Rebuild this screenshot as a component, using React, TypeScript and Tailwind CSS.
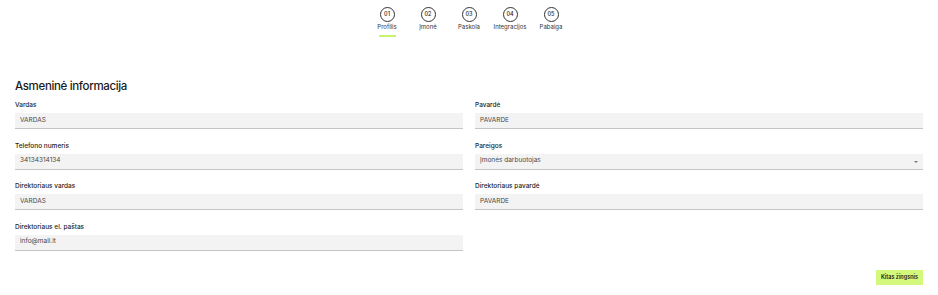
const steps = [
  { n: "01", label: "Profilis", active: true },
  { n: "02", label: "Įmonė" },
  { n: "03", label: "Paskola" },
  { n: "04", label: "Integracijos" },
  { n: "05", label: "Pabaiga" },
];

function Field({ label, value, select }: { label: string; value: string; select?: boolean }) {
  return (
    <div className="flex flex-col">
      <label className="text-[6.5px] font-medium text-[#1d1d1d] leading-[8px] mb-[4px]">{label}</label>
      <div className="relative h-[16px] bg-[#f3f3f3] border-b border-[#c4c4c4] flex items-center px-[5px] text-[6.5px] text-[#4a4a4a]">
        {value}
        {select && (
          <span className="absolute right-[5px] top-[7px] w-0 h-0 border-l-[2px] border-r-[2px] border-t-[2px] border-l-transparent border-r-transparent border-t-[#777]" />
        )}
      </div>
    </div>
  );
}

export default function App() {
  return (
    <div className="w-[938px] h-[295px] bg-white flex flex-col px-[15px]" style={{ fontFamily: "Inter, 'Noto Sans', sans-serif" }}>
      {/* Stepper */}
      <div className="flex justify-center pt-[7px]">
        {steps.map((s) => (
          <div key={s.n} className="w-[41px] flex flex-col items-center">
            <div className="w-[15px] h-[15px] rounded-full border border-[#333] flex items-center justify-center text-[5.5px] font-medium text-[#222]">
              {s.n}
            </div>
            <span className="mt-[1px] text-[6px] text-[#333] leading-[8px]">{s.label}</span>
            <span className={`mt-[4px] h-[2px] w-[17px] ${s.active ? "bg-[#c6f56b]" : "bg-transparent"}`} />
          </div>
        ))}
      </div>

      {/* Title */}
      <h1 className="mt-[41px] text-[11.5px] font-medium text-[#1a1a1a] tracking-[-0.03em] leading-[16px]">Asmeninė informacija</h1>

      {/* Form */}
      <div className="mt-[7px] grid grid-cols-2 gap-x-[12px] gap-y-[12.5px]">
        <Field label="Vardas" value="VARDAS" />
        <Field label="Pavardė" value="PAVARDE" />
        <Field label="Telefono numeris" value="34134314134" />
        <Field label="Pareigos" value="Įmonės darbuotojas" select />
        <Field label="Direktoriaus vardas" value="VARDAS" />
        <Field label="Direktoriaus pavardė" value="PAVARDE" />
        <Field label="Direktoriaus el. paštas" value="info@mail.lt" />
      </div>

      <div className="flex justify-end mt-[19px]">
        <button className="h-[15px] px-[5px] bg-[#d3f87c] text-[5.5px] font-semibold text-[#1a1a1a]">Kitas žingsnis</button>
      </div>
    </div>
  );
}
